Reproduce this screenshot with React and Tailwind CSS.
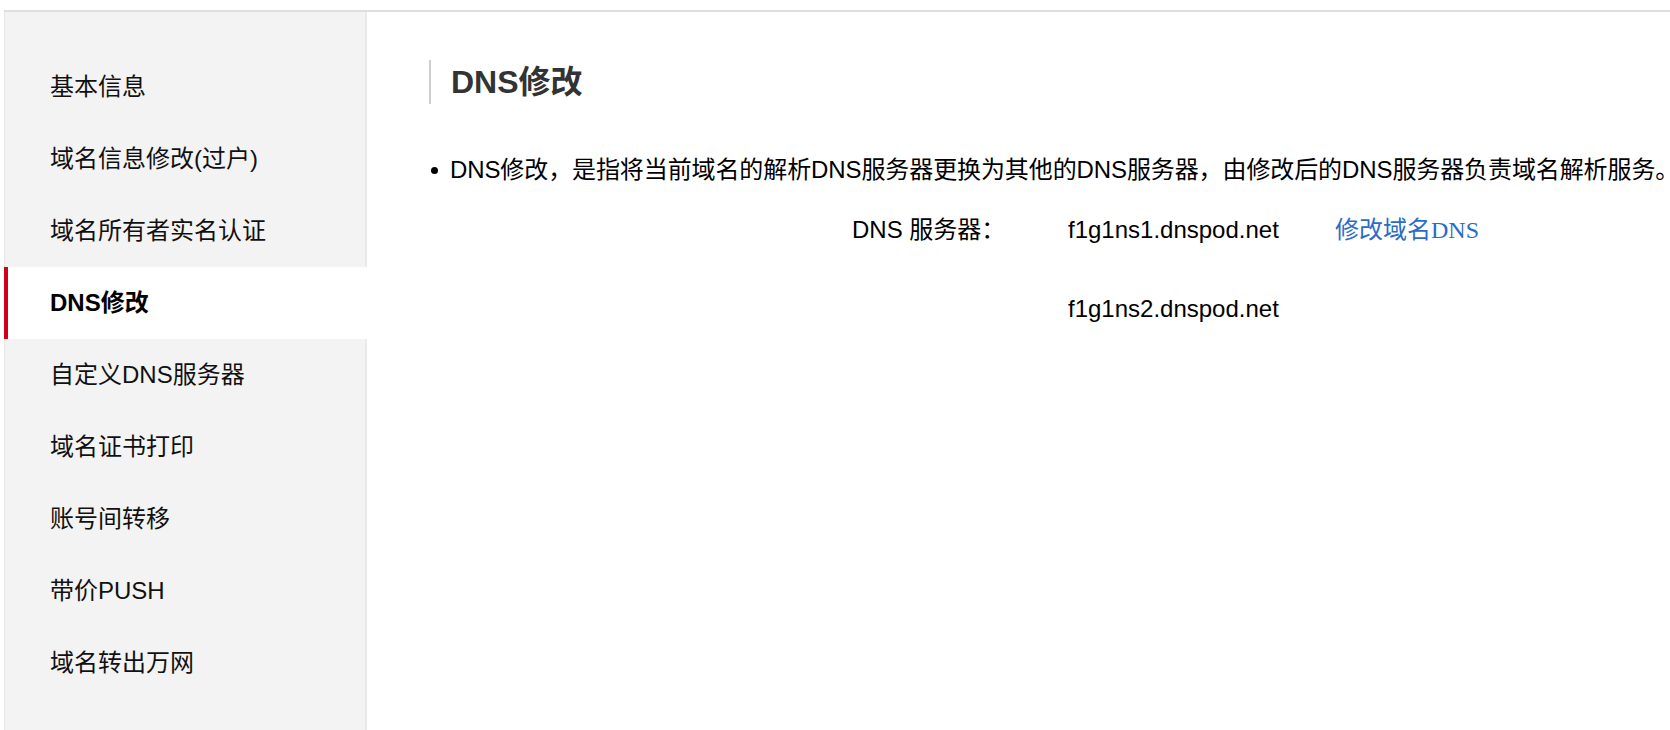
import React from 'react';

const menu = [
    '基本信息',
    '域名信息修改(过户)',
    '域名所有者实名认证',
    'DNS修改',
    '自定义DNS服务器',
    '域名证书打印',
    '账号间转移',
    '带价PUSH',
    '域名转出万网',
];

const sans = "font-['Liberation_Sans','Noto_Sans_CJK_SC',sans-serif]";

export default function App() {
    const active = 'DNS修改';

    return (
        <div className={`${sans} bg-white w-[1670px] h-[730px] overflow-hidden pt-[10px] pl-[4px]`}>
            <div className="flex w-[1666px] h-[720px] border-t-2 border-[#dedede]">
                {/* 左侧菜单 */}
                <div className="w-[363px] shrink-0 bg-[#f3f3f3] border-l border-[#e6e6e6] border-r-2 border-r-[#e9e9e9] pt-[39px]">
                    {menu.map((item) =>
                        item === active ? (
                            <div
                                key={item}
                                className="h-[72px] flex items-center bg-white -ml-px -mr-[2px] border-l-4 border-[#d0021b] pl-[42px] text-[24px] font-bold text-black"
                            >
                                {item}
                            </div>
                        ) : (
                            <div
                                key={item}
                                className="h-[72px] flex items-center pl-[45px] text-[24px] text-[#111]"
                            >
                                {item}
                            </div>
                        )
                    )}
                </div>

                {/* 内容 */}
                <div className="flex-1 min-w-0 pl-[62px] pt-[48px] text-black">
                    <h1 className="h-[44px] leading-[44px] border-l-2 border-[#cfcfcf] pl-[20px] text-[32px] font-bold text-[#333]">
                        DNS修改
                    </h1>

                    <div className="mt-[48px] flex items-center h-[36px] whitespace-nowrap text-[24px] tracking-[-0.1px]">
                        <span className="shrink-0 w-[7px] h-[7px] rounded-full bg-black ml-[2px] mr-[12px]" />
                        <span>DNS修改，是指将当前域名的解析DNS服务器更换为其他的DNS服务器，由修改后的DNS服务器负责域名解析服务。</span>
                    </div>

                    <div className="mt-[2px] grid grid-cols-[639px_267px_auto] grid-rows-[79px_79px] items-center text-[24px] whitespace-nowrap">
                        <div className="pl-[423px]">DNS 服务器：</div>
                        <div>f1g1ns1.dnspod.net</div>
                        <a
                            href="#"
                            className="text-[#2a6cc6] font-['Liberation_Serif','Noto_Sans_CJK_SC',serif]"
                        >
                            修改域名DNS
                        </a>
                        <div />
                        <div>f1g1ns2.dnspod.net</div>
                        <div />
                    </div>
                </div>
            </div>
        </div>
    );
}
